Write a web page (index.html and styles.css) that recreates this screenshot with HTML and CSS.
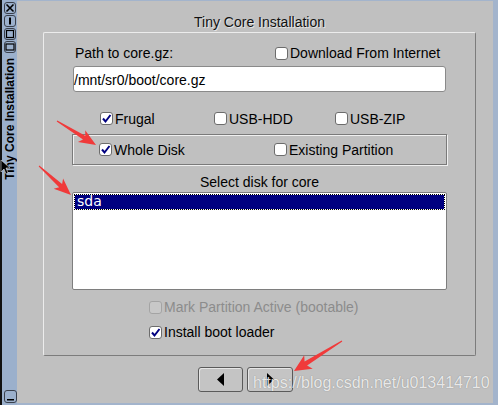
FILE: index.html
```html
<!DOCTYPE html>
<html>
<head>
<meta charset="utf-8">
<link rel="stylesheet" href="styles.css">
</head>
<body>
<div class="window">
  <div class="titlebar">
    <div class="tbtn"><svg width="10" height="10" viewBox="0 0 10 10"><path d="M1.5 1.5 L8.5 8.5 M8.5 1.5 L1.5 8.5" stroke="#000" stroke-width="1.6" fill="none"/></svg></div>
    <div class="tbtn"><svg width="10" height="10" viewBox="0 0 10 10"><rect x="4" y="1.5" width="2" height="7" fill="#000"/></svg></div>
    <div class="tbtn"><svg width="10" height="10" viewBox="0 0 10 10"><rect x="1.5" y="1.5" width="7" height="7" stroke="#000" stroke-width="1.2" fill="none"/></svg></div>
    <div class="tbtn"><svg width="10" height="10" viewBox="0 0 10 10"><rect x="1" y="2" width="8" height="6" stroke="#000" stroke-width="1.2" fill="none"/></svg></div>
    <div class="vtitle">Tiny Core Installation</div>
    <div class="tbtn tb-bottom"><svg width="11" height="11" viewBox="0 0 11 11"><rect x="2" y="8" width="7" height="1.5" fill="#000"/></svg></div>
  </div>
  <div class="main">
    <div class="title">Tiny Core Installation</div>
    <div class="group">
      <div class="path-row">
        <span class="path-label">Path to core.gz:</span>
        <label class="opt"><span class="cb"></span><span>Download From Internet</span></label>
      </div>
      <div class="input">/mnt/sr0/boot/core.gz</div>
      <div class="check-row">
        <label class="opt w114"><span class="cb on"><svg width="11" height="11" viewBox="0 0 11 11"><path d="M2 5.5 L4.5 8.5 L9.5 2" stroke="#000080" stroke-width="2" fill="none"/></svg></span><span>Frugal</span></label>
        <label class="opt w121"><span class="cb"></span><span>USB-HDD</span></label>
        <label class="opt"><span class="cb"></span><span>USB-ZIP</span></label>
      </div>
      <div class="frame">
        <label class="opt w175"><span class="cb on"><svg width="11" height="11" viewBox="0 0 11 11"><path d="M2 5.5 L4.5 8.5 L9.5 2" stroke="#000080" stroke-width="2" fill="none"/></svg></span><span>Whole Disk</span></label>
        <label class="opt"><span class="cb"></span><span>Existing Partition</span></label>
      </div>
      <div class="select-label">Select disk for core</div>
      <div class="listbox">
        <div class="sel">sda</div>
      </div>
      <div class="opt-row">
        <label class="opt disabled"><span class="cb"></span><span>Mark Partition Active (bootable)</span></label>
      </div>
      <div class="opt-row">
        <label class="opt"><span class="cb on"><svg width="11" height="11" viewBox="0 0 11 11"><path d="M2 5.5 L4.5 8.5 L9.5 2" stroke="#000080" stroke-width="2" fill="none"/></svg></span><span>Install boot loader</span></label>
      </div>
    </div>
    <div class="buttons">
      <div class="btn back"><svg width="8" height="13" viewBox="0 0 8 13"><polygon points="0,6.5 7,0 7,13" fill="#000"/></svg></div>
      <div class="btn fwd"><svg width="8" height="13" viewBox="0 0 8 13"><polygon points="8,6.5 1,0 1,13" fill="#000"/></svg></div>
    </div>
  </div>
</div>
<svg class="cursor" width="12" height="16" viewBox="0 0 12 16"><polygon points="1,0 1,12 4,9 6,14 8,13 6,8 10,8" fill="#000" stroke="#fff" stroke-width="0.5"/></svg>
<svg class="arrows" width="498" height="405" viewBox="0 0 498 405">
  <polygon fill="#f03a3a" points="56.7,121.4 83,139.6 77.9,142.1 96,145 85.2,130.2 85.3,135.8 57.3,120.6"/>
  <polygon fill="#f03a3a" points="38.7,166.4 59.1,187.3 53.7,188.8 71,195 63.1,178.4 62.1,184 39.3,165.6"/>
  <polygon fill="#f03a3a" points="341.7,340.5 304.6,361.6 304.2,355.2 294,371 312.7,368.8 307.1,365.6 342.3,341.5"/>
</svg>
<div class="watermark">https://blog.csdn.net/u013414710</div>
</body>
</html>
```
FILE: styles.css
```css
* { box-sizing: border-box; }
html, body { margin: 0; padding: 0; }
body {
  width: 498px;
  height: 405px;
  overflow: hidden;
  background: #c0c0c0;
  font-family: "Liberation Sans", Arial, sans-serif;
  font-size: 14px;
  color: #000;
  position: relative;
}
.window { display: flex; height: 405px; }
.titlebar {
  width: 17px;
  flex: none;
  border-left: 2px solid #111;
  background: #9bb0cc;
  display: flex;
  flex-direction: column;
  align-items: center;
  padding-top: 2px;
  padding-left: 1px;
}
.tbtn {
  width: 12px;
  height: 12px;
  border: 1px solid #3a404c;
  border-radius: 3px;
  margin-bottom: 1px;
  display: flex;
  align-items: center;
  justify-content: center;
}
.tb-bottom { margin-top: auto; margin-bottom: 2px; width: 13px; height: 13px; }
.vtitle {
  writing-mode: vertical-rl;
  transform: rotate(180deg);
  font-weight: bold;
  font-size: 12px;
  line-height: 13px;
  margin-top: 4px;
  white-space: nowrap;
}
.main {
  flex: 1;
  border-top: 1px solid #a3b4cc;
  border-right: 5px solid #a3b4cc;
  border-bottom: 2px solid #a3b4cc;
  display: flex;
  flex-direction: column;
  padding-left: 26px;
}
.title {
  width: 433px;
  text-align: center;
  padding-top: 13px;
  line-height: 16px;
  margin-bottom: 2px;
  color: #111;
  text-shadow: 1px 1px 0 #e4e4e4;
}
.group {
  width: 433px;
  border: 1px solid;
  border-color: #ececec #7c7c7c #7c7c7c #ececec;
  border-radius: 2px;
  padding: 12px 29px 15px;
  display: flex;
  flex-direction: column;
}
.opt { display: flex; align-items: center; gap: 2px; white-space: nowrap; }
.cb {
  width: 13px;
  height: 13px;
  flex: none;
  border: 1px solid #6c6c6c;
  border-radius: 3px;
  background: #fff;
  display: flex;
  align-items: center;
  justify-content: center;
}
.path-row {
  display: grid;
  grid-template-columns: 202px auto;
  align-items: center;
  height: 16px;
  line-height: 16px;
}
.path-label { padding-left: 2px; }
.input {
  margin-top: 5px;
  height: 26px;
  border: 1px solid #8a8a8a;
  border-radius: 3px;
  background: #fff;
  padding-top: 2px;
  line-height: 22px;
}
.check-row {
  margin-top: 18px;
  height: 17px;
  display: flex;
  align-items: center;
  padding-left: 27px;
}
.w114 { width: 114px; }
.w121 { width: 121px; }
.w175 { width: 175px; }
.frame {
  margin: 7px -1px 0;
  height: 31px;
  border: 1px solid #7a7a7a;
  box-shadow: inset 1px 1px 0 #f0f0f0, 1px 1px 0 #f0f0f0;
  display: flex;
  align-items: center;
  padding-left: 26px;
}
.select-label {
  margin-top: 9px;
  line-height: 16px;
  text-align: center;
}
.listbox {
  margin: 2px -1px 0;
  height: 98px;
  border: 1px solid #7e7e7e;
  border-radius: 2px;
  background: #fff;
  padding: 0 1px;
}
.sel {
  margin-top: 1px;
  height: 16px;
  background: #000080;
  outline: 1px dotted #000;
  outline-offset: -1px;
  box-shadow: inset 0 0 0 1px #fff;
  color: #fff;
  font-family: "DejaVu Sans", sans-serif;
  font-size: 14px;
  line-height: 15px;
  padding-left: 3px;
}
.opt-row {
  margin-top: 9px;
  height: 16px;
  display: flex;
  align-items: center;
  padding-left: 76px;
}
.disabled { color: #8c8c8c; }
.disabled .cb { background: #c8c8c8; border-color: #a4a4a4; }
.buttons {
  margin-top: 11px;
  display: flex;
  gap: 4px;
  padding-left: 155px;
}
.btn {
  width: 45px;
  height: 25px;
  border: 1px solid #5a5a5a;
  border-radius: 3px;
  background: #c4c4c4;
  box-shadow: inset 1px 1px 0 #e6e6e6;
  display: flex;
  align-items: center;
  justify-content: center;
}
.fwd { width: 46px; }
.cursor { position: absolute; left: 0; top: 160px; }
.arrows { position: absolute; left: 0; top: 0; pointer-events: none; }
.watermark {
  position: absolute;
  left: 253px;
  top: 374px;
  font-size: 16px;
  line-height: 18px;
  white-space: nowrap;
  color: rgba(255, 255, 255, 0.82);
  text-shadow: 0 0 1px rgba(80, 80, 80, 0.6);
}
```
